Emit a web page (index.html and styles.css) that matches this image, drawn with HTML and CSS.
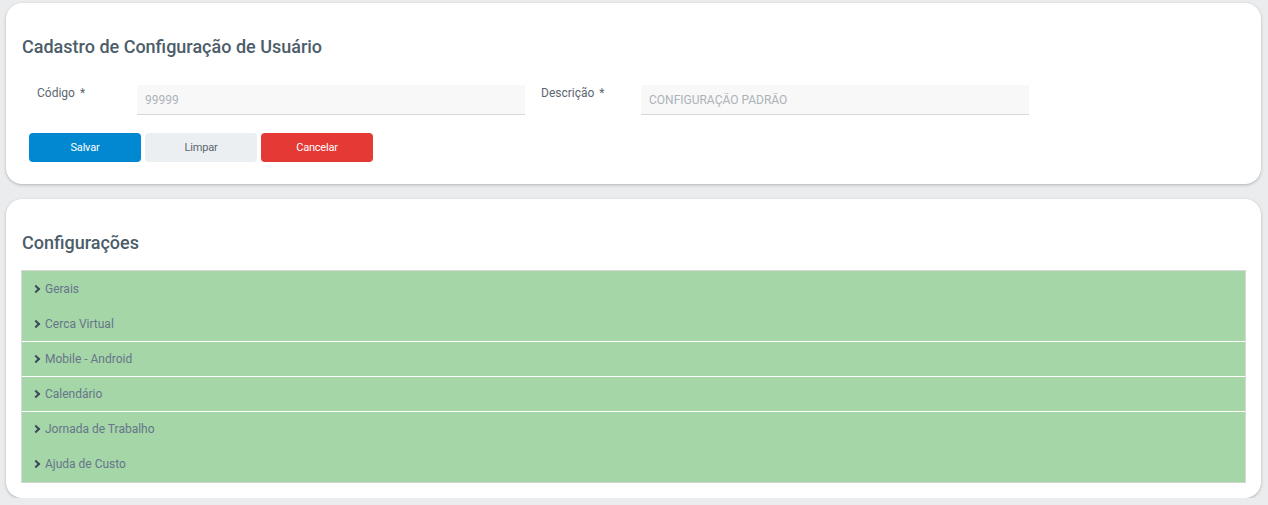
FILE: index.html
```html
<!DOCTYPE html>
<html lang="pt-BR">
<head>
  <meta charset="UTF-8">
  <meta name="viewport" content="width=device-width, initial-scale=1.0">
  <title>Cadastro de Configuração de Usuário</title>
  <link rel="stylesheet" href="styles.css">
</head>
<body>
  <div class="card">
    <h2 class="card-title">Cadastro de Configuração de Usuário</h2>
    <div class="form-row">
      <div class="field">
        <label class="field-label">Código <span class="req">*</span></label>
        <input class="field-input" type="text" placeholder="99999">
      </div>
      <div class="field">
        <label class="field-label">Descrição <span class="req">*</span></label>
        <input class="field-input" type="text" placeholder="CONFIGURAÇÃO PADRÃO">
      </div>
    </div>
    <div class="actions">
      <button class="btn btn-primary">Salvar</button>
      <button class="btn btn-light">Limpar</button>
      <button class="btn btn-danger">Cancelar</button>
    </div>
  </div>

  <div class="card card-config">
    <h2 class="card-title">Configurações</h2>
    <div class="accordion">
      <div class="acc-item">Gerais</div>
      <div class="acc-item">Cerca Virtual</div>
      <div class="acc-item sep">Mobile - Android</div>
      <div class="acc-item sep">Calendário</div>
      <div class="acc-item sep">Jornada de Trabalho</div>
      <div class="acc-item">Ajuda de Custo</div>
    </div>
  </div>
</body>
</html>
```

FILE: styles.css
```css
body {
  margin: 0;
  padding: 3px 7px 0 6px;
  background: #ebeced;
  font-family: Roboto, "Liberation Sans", sans-serif;
  color: #5b6670;
}

.card {
  background: #fff;
  border-radius: 16px;
  box-shadow: 0 1px 3px rgba(60, 70, 80, 0.35);
  padding: 33px 15px 22px;
}

.card-config {
  margin-top: 15px;
  padding-bottom: 15px;
}

.card-title {
  margin: 0 0 0 1px;
  font-size: 18px;
  font-weight: 500;
  line-height: 21px;
  color: #4c5d69;
}

.form-row {
  display: flex;
  margin-top: 28px;
  margin-left: 1px;
}

.field {
  display: flex;
  width: 504px;
  padding-left: 15px;
  box-sizing: border-box;
}

.field-label {
  width: 100px;
  flex: none;
  font-size: 12px;
  line-height: 14px;
  padding-top: 1px;
  color: #5b6670;
}

.req {
  margin-left: 2px;
}

.field-input {
  width: 388px;
  height: 30px;
  box-sizing: border-box;
  border: 0;
  border-bottom: 1px solid #d3d9de;
  background: #f8f8f8;
  padding: 0 8px;
  font-family: inherit;
  font-size: 12px;
  color: #5b6670;
  outline: none;
}

.field-input::placeholder {
  color: #acb3b9;
}

.actions {
  display: flex;
  gap: 4px;
  margin-top: 18px;
  margin-left: 8px;
}

.btn {
  width: 112px;
  height: 29px;
  border: 0;
  border-radius: 4px;
  font-family: inherit;
  font-size: 11px;
  letter-spacing: -0.2px;
  cursor: pointer;
}

.btn-primary {
  background: #0288d1;
  color: #fff;
}

.btn-light {
  background: #eceff1;
  color: #5b6670;
}

.btn-danger {
  background: #e53935;
  color: #fff;
}

.accordion {
  margin-top: 17px;
  background: #a5d6a7;
  border: 1px solid #d6d9d6;
  border-bottom-color: #cfd6cf;
}

.acc-item {
  display: flex;
  align-items: center;
  box-sizing: border-box;
  height: 35px;
  padding-left: 11px;
  font-size: 12px;
  color: #66758a;
}

.acc-item:last-child {
  height: 36px;
}

.acc-item.sep {
  border-top: 1px solid #fff;
}

.acc-item::before {
  content: "";
  width: 4px;
  height: 4px;
  border-top: 2px solid #3d4a5c;
  border-right: 2px solid #3d4a5c;
  transform: rotate(45deg);
  margin-right: 6px;
}
```
